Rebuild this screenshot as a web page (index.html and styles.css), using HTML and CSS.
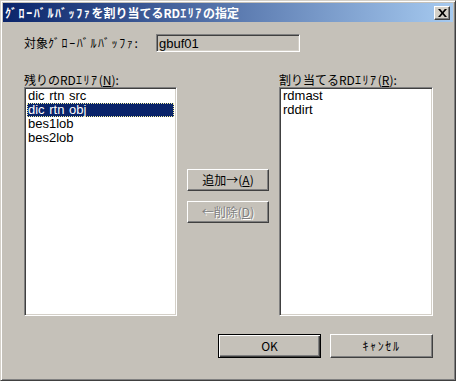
FILE: index.html
```html
<!DOCTYPE html>
<html lang="ja">

<head>
    <meta charset="UTF-8">
    <meta name="viewport" content="width=device-width, initial-scale=1.0">
    <title>ｸﾞﾛｰﾊﾞﾙﾊﾞｯﾌｧを割り当てるRDｴﾘｱの指定</title>
    <link rel="stylesheet" href="styles.css">
</head>

<body>
    <div class="window">
        <!-- Barra de título -->
        <div class="titlebar">
            <span class="title"><span class="hw">ｸﾞﾛｰﾊﾞﾙﾊﾞｯﾌｧ</span>を割り当てるRD<span class="hw">ｴﾘｱ</span>の指定</span>
            <button class="btn-close" title="閉じる">
                <svg width="9" height="8" viewBox="0 0 9 8">
                    <path d="M0 0h2.2l2.3 2.7L6.8 0H9L5.6 4 9 8H6.8L4.5 5.3 2.2 8H0l3.4-4z" fill="#000"/>
                </svg>
            </button>
        </div>

        <div class="dialog">
            <!-- Buffer destino -->
            <div class="target-row">
                <span class="label">対象<span class="hw">ｸﾞﾛｰﾊﾞﾙﾊﾞｯﾌｧ</span>:</span>
                <div class="field">gbuf01</div>
            </div>

            <!-- Listas -->
            <div class="lists">
                <div class="list-col">
                    <label class="label" for="remain">残りのRD<span class="hw">ｴﾘｱ</span>(<u>N</u>):</label>
                    <ul class="listbox" id="remain">
                        <li>dic rtn src</li>
                        <li class="selected">dic rtn obj</li>
                        <li>bes1lob</li>
                        <li>bes2lob</li>
                    </ul>
                </div>

                <div class="mid-col">
                    <button class="btn">追加→(<u>A</u>)</button>
                    <button class="btn" disabled>←削除(<u>D</u>)</button>
                </div>

                <div class="list-col">
                    <label class="label" for="assigned">割り当てるRD<span class="hw">ｴﾘｱ</span>(<u>R</u>):</label>
                    <ul class="listbox" id="assigned">
                        <li>rdmast</li>
                        <li>rddirt</li>
                    </ul>
                </div>
            </div>

            <!-- Botones -->
            <div class="footer">
                <button class="btn btn-big btn-default">OK</button>
                <button class="btn btn-big"><span class="hw">ｷｬﾝｾﾙ</span></button>
            </div>
        </div>
    </div>
</body>

</html>
```

FILE: styles.css
```css
/* Diálogo estilo Windows clásico */
body {
    margin: 0;
    padding: 0;
    background-color: #c5c1b9;
    font-family: "Noto Sans CJK JP", "Liberation Sans", sans-serif;
    font-size: 12px;
}

.window {
    width: 456px;
    height: 381px;
    box-sizing: border-box;
    background-color: #c5c1b9;
    border: 1px solid;
    border-color: #d4d0c8 #404040 #404040 #d4d0c8;
    box-shadow: inset 1px 1px #ffffff, inset -1px -1px #808080;
    padding: 2px;
}

/* Katakana de medio ancho, más separados */
.hw {
    letter-spacing: 1.6px;
}

.titlebar {
    height: 19px;
    display: flex;
    align-items: center;
    justify-content: space-between;
    background: linear-gradient(to right, #0a246a, #a6caf0);
    padding: 0 3px 0 2px;
}

.title {
    color: white;
    font-weight: bold;
    font-size: 12px;
    line-height: 14px;
    white-space: nowrap;
}

.btn-close {
    width: 16px;
    height: 14px;
    padding: 0;
    margin: 0;
    display: flex;
    align-items: center;
    justify-content: center;
    background-color: #d4d0c8;
    border: 1px solid;
    border-color: #ffffff #404040 #404040 #ffffff;
    box-shadow: inset -1px -1px #808080;
}

.dialog {
    padding: 0 20px 0 21px;
}

.label {
    display: block;
    font-size: 12px;
    line-height: 14px;
    color: #000;
    white-space: nowrap;
}

.target-row {
    display: flex;
    align-items: center;
    margin-top: 12px;
    height: 18px;
}

.target-row .label {
    width: 132px;
}

.field {
    width: 144px;
    height: 18px;
    box-sizing: border-box;
    background-color: #c5c1b9;
    border: 1px solid;
    border-color: #808080 #ffffff #ffffff #808080;
    box-shadow: inset 1px 1px #404040, inset -1px -1px #d4d0c8;
    padding: 1px 2px;
    font-family: "Liberation Sans", sans-serif;
    font-size: 13px;
    line-height: 15px;
}

.lists {
    display: grid;
    grid-template-columns: 153px 1fr 154px;
    margin-top: 21px;
}

.list-col {
    display: flex;
    flex-direction: column;
}

.listbox {
    list-style: none;
    margin: 0;
    height: 229px;
    box-sizing: border-box;
    background-color: #fff;
    border: 1px solid;
    border-color: #808080 #ffffff #ffffff #808080;
    box-shadow: inset 1px 1px #404040, inset -1px -1px #d4d0c8;
    padding: 1px 2px;
    font-family: "Liberation Sans", sans-serif;
    font-size: 13px;
}

.listbox li {
    height: 14px;
    line-height: 14px;
    padding-left: 1px;
    white-space: nowrap;
    word-spacing: 1px;
}

.listbox li.selected {
    background-color: #0a246a;
    color: white;
    outline: 1px dotted #f4f0a0;
    outline-offset: -1px;
}

.mid-col {
    display: flex;
    flex-direction: column;
    align-items: center;
    gap: 10px;
    padding-top: 96px;
}

.btn {
    width: 82px;
    height: 22px;
    padding: 0;
    background-color: #c5c1b9;
    border: 1px solid;
    border-color: #ffffff #404040 #404040 #ffffff;
    box-shadow: inset -1px -1px #808080;
    font-family: "Noto Sans CJK JP", sans-serif;
    font-size: 12px;
    line-height: 14px;
    color: #000;
}

.btn:disabled {
    color: #808080;
    text-shadow: 1px 1px #ffffff;
}

.footer {
    display: flex;
    justify-content: flex-end;
    gap: 9px;
    margin-top: 18px;
}

.btn-big {
    width: 103px;
    height: 24px;
}

.btn-default {
    border: 1px solid #000;
    box-shadow: inset 1px 1px #ffffff, inset -1px -1px #404040, inset -2px -2px #808080;
}
```
